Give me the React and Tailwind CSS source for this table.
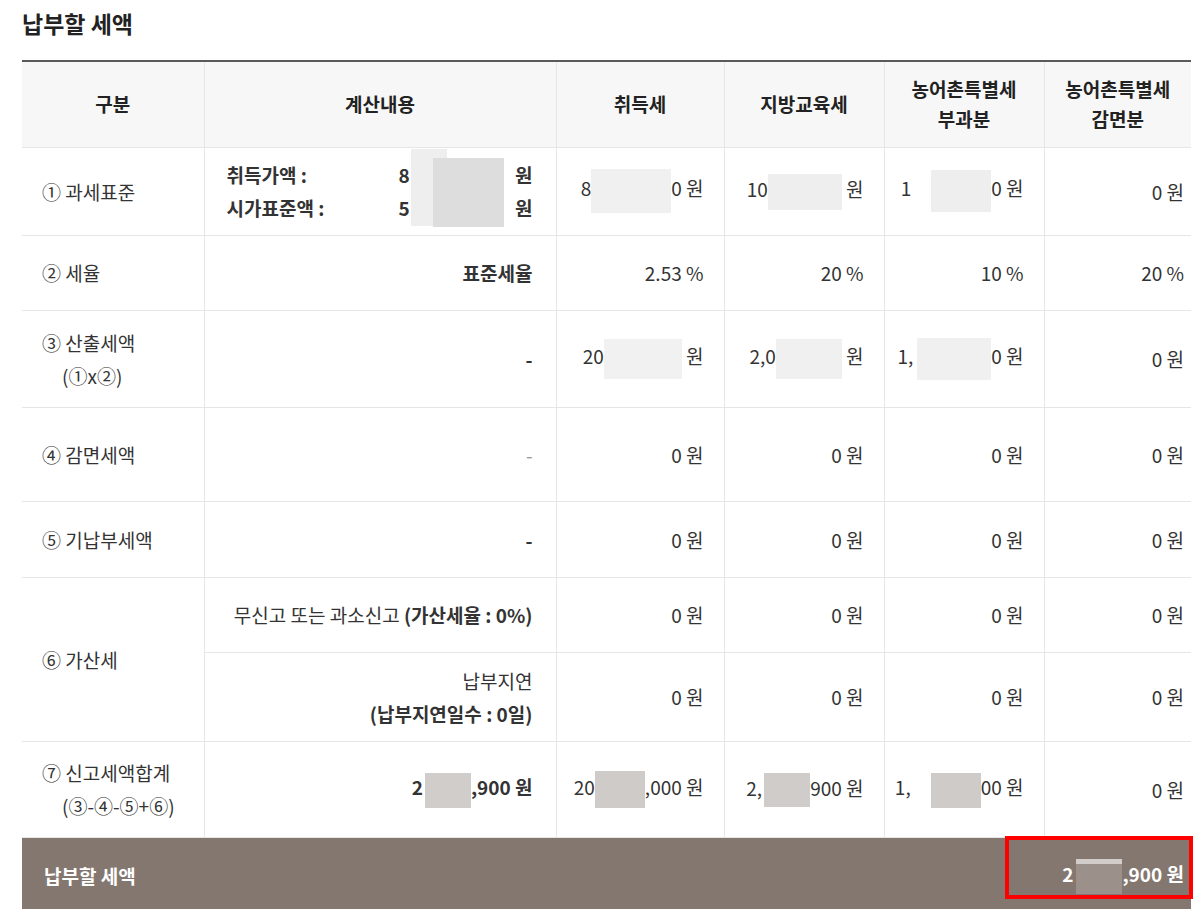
import React from "react";

const td = "border-b border-[#e6e6e6] border-r border-r-[#e6e6e6] align-middle";

export default function App() {
  return (
    <div className="min-h-[909px] bg-white px-[22px] font-['Noto_Sans_CJK_KR',sans-serif] text-[#333] overflow-hidden">
      <h2 className="pt-[8px] pb-[21px] text-[23px] leading-[31px] font-bold text-[#222]">납부할 세액</h2>
      <table className="w-[1169px] table-fixed border-collapse border-t-2 border-t-[#5a5a5a] text-[19px]">
        <colgroup>
          <col className="w-[182px]" />
          <col className="w-[352px]" />
          <col className="w-[168px]" />
          <col className="w-[160px]" />
          <col className="w-[160px]" />
          <col className="w-[147px]" />
        </colgroup>
        <thead>
          <tr className="h-[86px] bg-[#f7f7f7] font-bold text-[#222] leading-[30px]">
            <th className={td}>구분</th>
            <th className={td}>계산내용</th>
            <th className={td}>취득세</th>
            <th className={td}>지방교육세</th>
            <th className={td}>농어촌특별세<br />부과분</th>
            <th className="border-b border-[#e6e6e6] align-middle">농어촌특별세<br />감면분</th>
          </tr>
        </thead>
        <tbody className="leading-[33px]">
          {/* row 1 */}
          <tr className="h-[88px]">
            <td className={`${td} pl-[20px]`}>① 과세표준</td>
            <td className={`${td} relative pl-[22px] pr-[23px]`}>
              <div className="flex font-bold">
                <span className="w-[172px]">취득가액 :</span>
                <span>8</span>
                <span className="ml-auto">원</span>
              </div>
              <div className="flex font-bold">
                <span className="w-[172px]">시가표준액 :</span>
                <span>5</span>
                <span className="ml-auto">원</span>
              </div>
              <span className="absolute left-[206px] top-[1px] h-[77px] w-[36px] bg-[#eeeeee]"></span>
              <span className="absolute left-[228px] top-[10px] h-[69px] w-[71px] bg-[#dddddd]"></span>
            </td>
            <td className={`${td} pr-[20px] text-right whitespace-nowrap`}>
              8<span className="inline-block h-[44px] w-[80px] bg-[#f0f0f0] align-middle"></span>0 원
            </td>
            <td className={`${td} pr-[20px] text-right whitespace-nowrap`}>
              10<span className="inline-block h-[36px] w-[74px] bg-[#eeeeee] align-middle"></span> 원
            </td>
            <td className={`${td} pr-[20px] text-right whitespace-nowrap`}>
              1<span className="ml-[20px] inline-block h-[42px] w-[60px] bg-[#eeeeee] align-middle"></span>0 원
            </td>
            <td className="border-b border-[#e6e6e6] pr-[7px] text-right">0 원</td>
          </tr>
          {/* row 2 */}
          <tr className="h-[75px]">
            <td className={`${td} pl-[20px]`}>② 세율</td>
            <td className={`${td} pr-[23px] text-right font-bold`}>표준세율</td>
            <td className={`${td} pr-[20px] text-right`}>2.53 %</td>
            <td className={`${td} pr-[20px] text-right`}>20 %</td>
            <td className={`${td} pr-[20px] text-right`}>10 %</td>
            <td className="border-b border-[#e6e6e6] pr-[7px] text-right">20 %</td>
          </tr>
          {/* row 3 */}
          <tr className="h-[97px]">
            <td className={`${td} pl-[20px]`}>
              <div>③ 산출세액</div>
              <div className="pl-[20px]">(①x②)</div>
            </td>
            <td className={`${td} pr-[23px] text-right font-bold`}>-</td>
            <td className={`${td} pr-[20px] text-right whitespace-nowrap`}>
              20<span className="inline-block h-[40px] w-[78px] bg-[#f1f1f1] align-middle"></span> 원
            </td>
            <td className={`${td} pr-[20px] text-right whitespace-nowrap`}>
              2,0<span className="inline-block h-[40px] w-[66px] bg-[#f0f0f0] align-middle"></span> 원
            </td>
            <td className={`${td} pr-[20px] text-right whitespace-nowrap`}>
              1,<span className="ml-[4px] inline-block h-[42px] w-[74px] bg-[#f0f0f0] align-middle"></span>0 원
            </td>
            <td className="border-b border-[#e6e6e6] pr-[7px] text-right">0 원</td>
          </tr>
          {/* row 4 */}
          <tr className="h-[94px]">
            <td className={`${td} pl-[20px]`}>④ 감면세액</td>
            <td className={`${td} pr-[23px] text-right text-[#999]`}>-</td>
            <td className={`${td} pr-[20px] text-right`}>0 원</td>
            <td className={`${td} pr-[20px] text-right`}>0 원</td>
            <td className={`${td} pr-[20px] text-right`}>0 원</td>
            <td className="border-b border-[#e6e6e6] pr-[7px] text-right">0 원</td>
          </tr>
          {/* row 5 */}
          <tr className="h-[76px]">
            <td className={`${td} pl-[20px]`}>⑤ 기납부세액</td>
            <td className={`${td} pr-[23px] text-right font-bold`}>-</td>
            <td className={`${td} pr-[20px] text-right`}>0 원</td>
            <td className={`${td} pr-[20px] text-right`}>0 원</td>
            <td className={`${td} pr-[20px] text-right`}>0 원</td>
            <td className="border-b border-[#e6e6e6] pr-[7px] text-right">0 원</td>
          </tr>
          {/* row 6a */}
          <tr className="h-[75px]">
            <td className={`${td} pl-[20px]`} rowSpan={2}>⑥ 가산세</td>
            <td className={`${td} pr-[23px] text-right`}>
              무신고 또는 과소신고 <span className="font-bold">(가산세율 : 0%)</span>
            </td>
            <td className={`${td} pr-[20px] text-right`}>0 원</td>
            <td className={`${td} pr-[20px] text-right`}>0 원</td>
            <td className={`${td} pr-[20px] text-right`}>0 원</td>
            <td className="border-b border-[#e6e6e6] pr-[7px] text-right">0 원</td>
          </tr>
          {/* row 6b */}
          <tr className="h-[89px]">
            <td className={`${td} pr-[23px] text-right`}>
              <div>납부지연</div>
              <div className="font-bold">(납부지연일수 : 0일)</div>
            </td>
            <td className={`${td} pr-[20px] text-right`}>0 원</td>
            <td className={`${td} pr-[20px] text-right`}>0 원</td>
            <td className={`${td} pr-[20px] text-right`}>0 원</td>
            <td className="border-b border-[#e6e6e6] pr-[7px] text-right">0 원</td>
          </tr>
          {/* row 7 */}
          <tr className="h-[96px]">
            <td className={`${td} pl-[20px]`}>
              <div>⑦ 신고세액합계</div>
              <div className="pl-[20px]">(③-④-⑤+⑥)</div>
            </td>
            <td className={`${td} pr-[23px] text-right font-bold whitespace-nowrap`}>
              2<span className="ml-[2px] inline-block h-[35px] w-[46px] bg-[#d1cdcb] align-middle"></span>,900 원
            </td>
            <td className={`${td} pr-[20px] text-right whitespace-nowrap`}>
              20<span className="inline-block h-[37px] w-[50px] bg-[#cfcbc9] align-middle"></span>,000 원
            </td>
            <td className={`${td} pr-[20px] text-right whitespace-nowrap`}>
              2,<span className="ml-[2px] inline-block h-[34px] w-[46px] bg-[#d0ccca] align-middle"></span>900 원
            </td>
            <td className={`${td} pr-[20px] text-right whitespace-nowrap`}>
              1,<span className="ml-[20px] inline-block h-[35px] w-[50px] bg-[#cfcbc9] align-middle"></span>00 원
            </td>
            <td className="border-b border-[#e6e6e6] pr-[7px] text-right">0 원</td>
          </tr>
        </tbody>
      </table>
      <div className="relative flex h-[78px] w-[1169px] items-center justify-between bg-[#847770] pl-[22px] pr-[7px] text-[19px] font-bold text-white">
        <span>납부할 세액</span>
        <span className="whitespace-nowrap">
          2<span className="ml-[3px] inline-block h-[35px] w-[46px] bg-[#9b908a] align-middle border-t-[5px] border-t-[#d2cdca]"></span>,900 원
        </span>
        <span className="absolute left-[983px] top-[-2px] h-[63px] w-[188px] border-[4px] border-[#ff0000]"></span>
      </div>
    </div>
  );
}
